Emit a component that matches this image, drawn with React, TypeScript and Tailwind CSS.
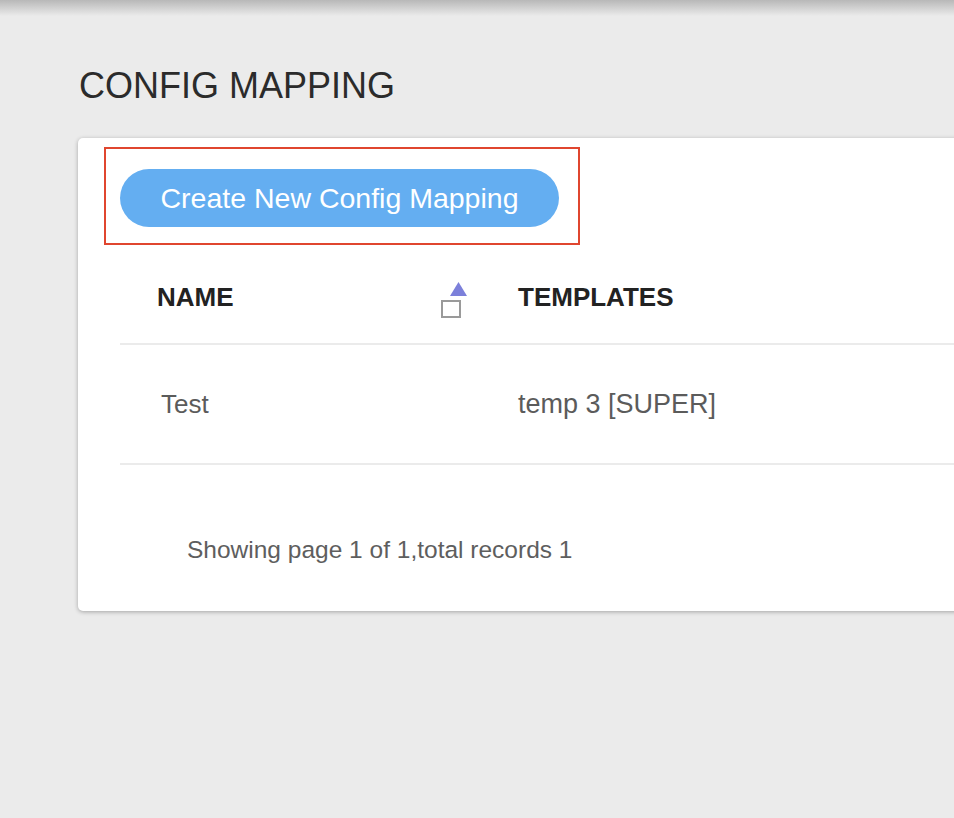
import React from "react";

const rows = [{ name: "Test", templates: "temp 3 [SUPER]" }];

function SortIcon() {
  return (
    <svg width="28" height="40" viewBox="0 0 28 40" className="block">
      <path d="M9 15 L17.5 1 L26 15 Z" fill="#7c80da" />
      <rect x="1" y="20" width="18" height="16" fill="#fff" stroke="#9a9a9a" strokeWidth="2" />
    </svg>
  );
}

export default function App() {
  return (
    <div
      className="w-full h-screen overflow-hidden bg-[#ebebeb]"
      style={{ fontFamily: '"Liberation Sans", Arial, sans-serif' }}
    >
      <div className="h-4 bg-gradient-to-b from-[#b8b8b8] to-[#ebebeb]"></div>
      <h1 className="mt-[52px] ml-[79px] text-[36px] leading-[36px] font-normal text-[#2b2b2b]">
        CONFIG MAPPING
      </h1>
      <div className="mt-[34px] ml-[78px] w-[1000px] bg-white rounded-[5px] shadow-[0_1px_4px_rgba(0,0,0,0.3)] pt-[9px] pl-[26px]">
        <div className="inline-block border-2 border-[#e0462f] pl-[14px] pr-[19px] pt-[20px] pb-[16px]">
          <button className="w-[439px] h-[58px] rounded-full bg-[#64aef1] text-white text-[28.5px] leading-none">
            Create New Config Mapping
          </button>
        </div>
        <div className="ml-[16px]">
          <div className="flex h-[100px] pt-[6px] items-center border-b-2 border-[#ebebeb]">
            <div className="w-[360px] pl-[37px] pr-[11px] flex items-center">
              <span className="text-[26px] font-bold text-[#222]">NAME</span>
              <span className="ml-auto mt-[8px]">
                <SortIcon />
              </span>
            </div>
            <div className="pl-[38px] text-[26px] font-bold text-[#222]">TEMPLATES</div>
          </div>
          {rows.map((r) => (
            <div
              key={r.name}
              className="flex h-[120px] pt-[1px] items-center border-b-2 border-[#ebebeb] text-[26px] text-[#5b5b5b]"
            >
              <div className="w-[360px] pl-[41px]">{r.name}</div>
              <div className="pl-[38px] text-[27px]">{r.templates}</div>
            </div>
          ))}
          <div className="pt-[71px] pb-[47px] pl-[67px] text-[24.5px] leading-[28px] text-[#5e5e5e]">
            Showing page 1 of 1,total records 1
          </div>
        </div>
      </div>
    </div>
  );
}
